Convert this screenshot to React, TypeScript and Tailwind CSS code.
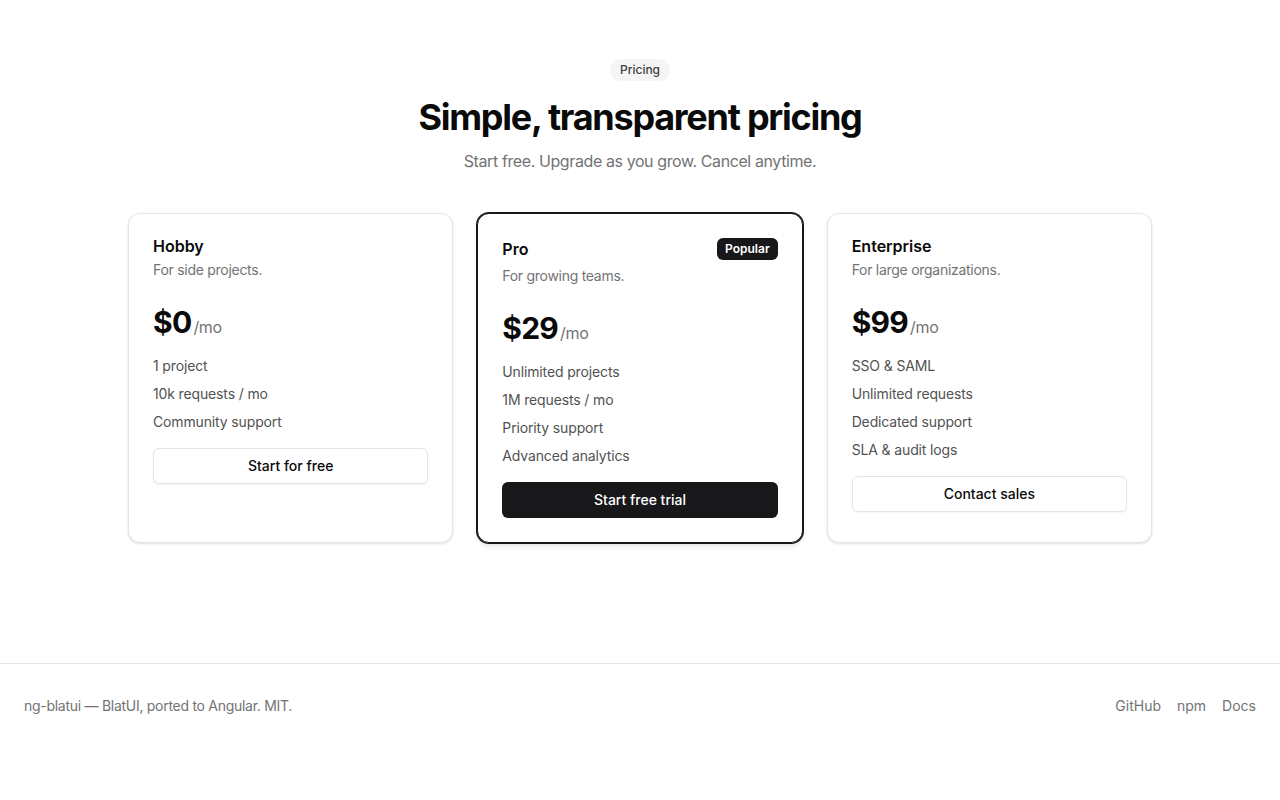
import {FC} from "react";

interface Plan {
  name: string;
  tagline: string;
  price: string;
  features: string[];
  cta: string;
  featured?: boolean;
}

const plans: Plan[] = [
  {
    name: "Hobby",
    tagline: "For side projects.",
    price: "$0",
    features: ["1 project", "10k requests / mo", "Community support"],
    cta: "Start for free",
  },
  {
    name: "Pro",
    tagline: "For growing teams.",
    price: "$29",
    features: ["Unlimited projects", "1M requests / mo", "Priority support", "Advanced analytics"],
    cta: "Start free trial",
    featured: true,
  },
  {
    name: "Enterprise",
    tagline: "For large organizations.",
    price: "$99",
    features: ["SSO & SAML", "Unlimited requests", "Dedicated support", "SLA & audit logs"],
    cta: "Contact sales",
  },
];

const PlanCard: FC<{plan: Plan}> = ({plan}) => {
  const featured = !!plan.featured;
  return (
    <div
      className={
        featured
          ? "flex flex-col rounded-xl border border-[#18181b] bg-white p-6 shadow-md ring-1 ring-[#18181b]"
          : "flex flex-col rounded-xl border border-neutral-200 bg-white p-6 shadow-sm"
      }
    >
      <div className="flex items-center justify-between">
        <h3 className="text-base leading-4 font-semibold text-[#0a0a0a]">{plan.name}</h3>
        {featured && (
          <span className="rounded-md bg-[#18181b] px-2 py-[3px] text-xs leading-4 font-semibold text-white">
            Popular
          </span>
        )}
      </div>
      <p className="mt-1.5 text-sm leading-5 tracking-[-0.02em] text-neutral-500">{plan.tagline}</p>

      <div className="mt-6 flex items-baseline">
        <span className="text-3xl leading-9 font-bold tracking-tight text-[#0a0a0a]">{plan.price}</span>
        <span className="ml-0.5 text-base tracking-[-0.02em] text-neutral-500">/mo</span>
      </div>

      <ul className="mt-4 flex flex-col gap-2">
        {plan.features.map((f) => (
          <li key={f} className="text-sm leading-5 tracking-[-0.01em] text-neutral-600">{f}</li>
        ))}
      </ul>

      <button
        className={
          featured
            ? "mt-4 h-9 w-full rounded-md bg-[#18181b] text-sm font-medium text-white"
            : "mt-4 h-9 w-full rounded-md border border-neutral-200 bg-white text-sm font-medium text-[#0a0a0a] shadow-xs"
        }
      >
        {plan.cta}
      </button>
    </div>
  );
};

export default function App() {
  return (
    <div className="min-h-screen bg-white font-['Inter',sans-serif] text-[#0a0a0a]">
      <main className="px-6 pt-[59px] pb-[120px]">
        <div className="flex flex-col items-center text-center">
          <span className="rounded-full bg-neutral-100 px-2.5 py-[3px] text-xs leading-4 font-medium text-neutral-700">
            Pricing
          </span>
          <h1 className="mt-4 text-4xl leading-10 font-bold tracking-[-0.035em]">Simple, transparent pricing</h1>
          <p className="mt-3 text-base leading-6 tracking-[-0.025em] text-neutral-500">
            Start free. Upgrade as you grow. Cancel anytime.
          </p>
        </div>

        <div className="mx-auto mt-10 grid max-w-5xl grid-cols-3 gap-6">
          {plans.map((p) => (
            <PlanCard key={p.name} plan={p}/>
          ))}
        </div>
      </main>

      <footer className="border-t border-neutral-200 px-6 py-8">
        <div className="flex items-center justify-between text-sm leading-5 text-neutral-500">
          <span className="tracking-[-0.02em]">ng-blatui — BlatUI, ported to Angular. MIT.</span>
          <nav className="flex gap-4">
            <a href="#">GitHub</a>
            <a href="#">npm</a>
            <a href="#">Docs</a>
          </nav>
        </div>
      </footer>
    </div>
  );
}
